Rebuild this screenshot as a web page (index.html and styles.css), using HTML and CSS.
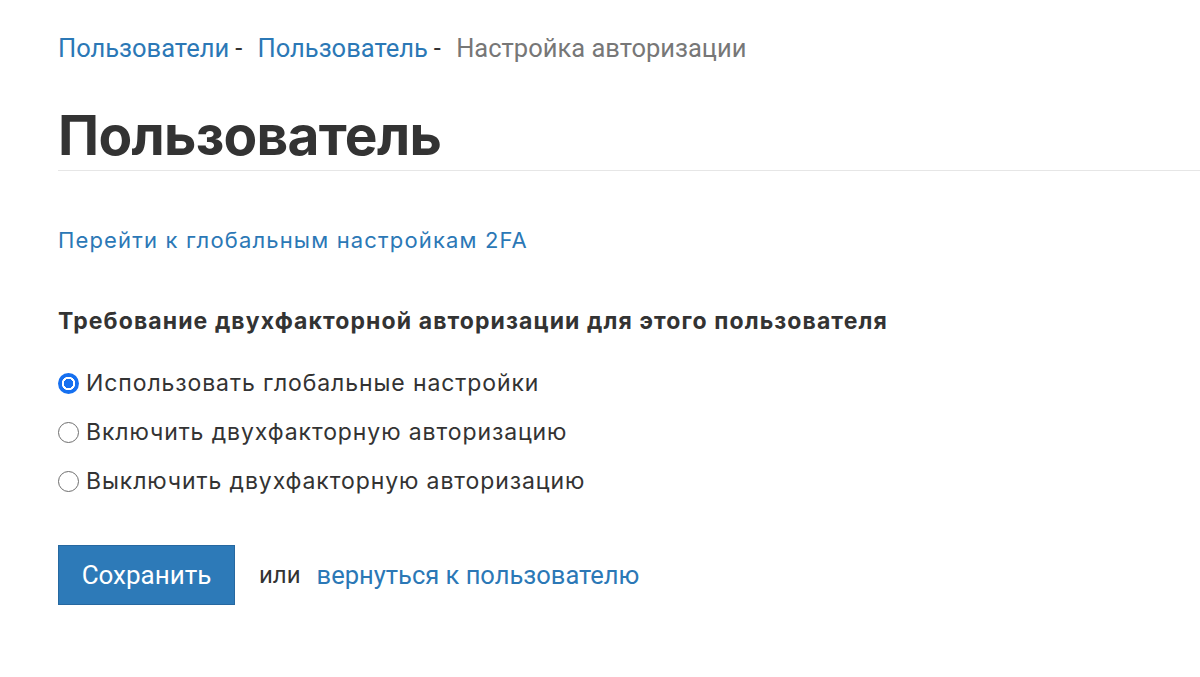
FILE: index.html
```html
<!DOCTYPE html>
<html lang="ru">
<head>
	<meta charset="UTF-8">
	<title>Настройка авторизации</title>
	<link rel="stylesheet" href="styles.css">
</head>
<body>
	<div class="page">
		<div class="crumbs">
			<a href="#">Пользователи</a><span class="sep">-</span>
			<a href="#">Пользователь</a><span class="sep">-</span>
			<span class="current">Настройка авторизации</span>
		</div>
		<h1 class="title">Пользователь</h1>

		<p class="global"><a href="#">Перейти к глобальным настройкам 2FA</a></p>

		<form class="twofa">
			<div class="label">Требование двухфакторной авторизации для этого пользователя</div>
			<label class="radio"><input type="radio" name="mode" checked> Использовать глобальные настройки</label>
			<label class="radio"><input type="radio" name="mode"> Включить двухфакторную авторизацию</label>
			<label class="radio"><input type="radio" name="mode"> Выключить двухфакторную авторизацию</label>

			<div class="actions">
				<button type="button" class="save">Сохранить</button>
				<span class="or">или</span>
				<a href="#" class="back">вернуться к пользователю</a>
			</div>
		</form>
	</div>
</body>
</html>
```

FILE: styles.css
```css
*{margin:0; padding:0; box-sizing:border-box;}
body{background:#fff; color:#333; font-family:Inter, "Noto Sans", sans-serif;}
a{color:#2b78b6; text-decoration:none;}

.page{padding:30px 0 0 58px;}

.crumbs{font-family:Roboto, sans-serif; font-size:25.5px; line-height:36px; color:#333;}
.crumbs .sep{margin:0 9px 0 6px;}
.crumbs .current{color:#777;}

.title{font-size:55px; font-weight:700; line-height:66px; margin-top:36px; padding-bottom:2px; border-bottom:1px solid #e6e6e6; letter-spacing:-0.7px;}

.global{font-size:22px; letter-spacing:1.15px; line-height:32px; margin-top:53px;}

.twofa{margin-top:49px;}
.label{font-size:23px; font-weight:700; letter-spacing:1.1px; line-height:32px; margin-bottom:22px;}
.radio{display:flex; align-items:center; font-size:23px; letter-spacing:0.9px; line-height:49px; height:49px;}
.radio input{appearance:none; -webkit-appearance:none; width:21px; height:21px; margin:0 7px 0 0; border:1px solid #6e6e6e; border-radius:50%; background:#fff;}
.radio input:checked{border:none; background:radial-gradient(circle, #1670f0 0 4.5px, #fff 5px 6.5px, #1670f0 7px);}

.actions{display:flex; align-items:center; margin-top:39px;}
.save{width:177px; height:60px; background:#2d7ab8; border:1px solid #2668a0; color:#fff; font-family:Roboto, sans-serif; font-size:26px;}
.or{font-family:Roboto, sans-serif; font-size:24px; margin:0 16px 0 24px;}
.back{font-family:Roboto, sans-serif; font-size:25.5px;}
```
